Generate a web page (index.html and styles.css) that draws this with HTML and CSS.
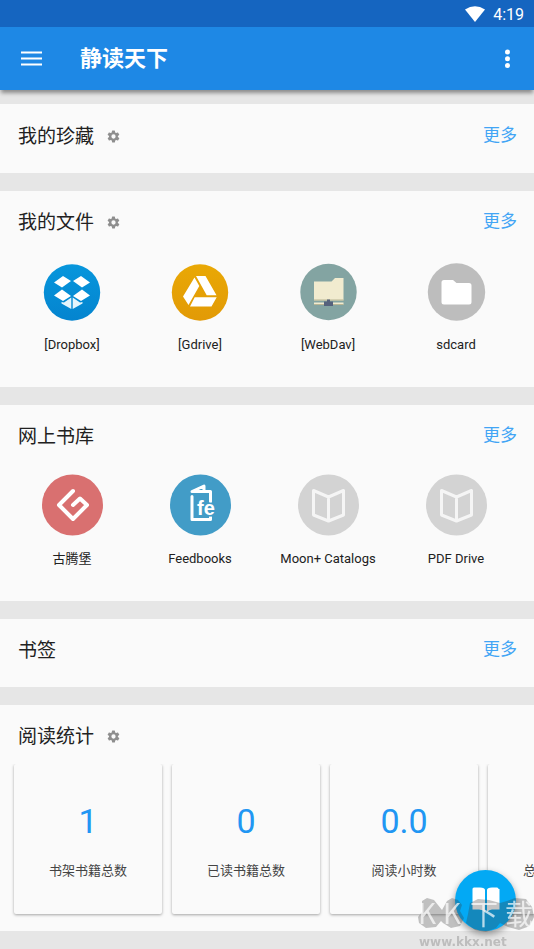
FILE: index.html
```html
<!DOCTYPE html>
<html lang="zh-CN">
<head>
<meta charset="utf-8">
<meta name="viewport" content="width=device-width, initial-scale=1">
<title>静读天下</title>
<link rel="stylesheet" href="styles.css">
</head>
<body>
<svg class="defs" width="0" height="0" aria-hidden="true">
  <defs>
    <symbol id="gear" viewBox="1 1 22 22"><path d="M19.4 13a7.5 7.5 0 0 0 0-2l2.1-1.6a.5.5 0 0 0 .1-.7l-2-3.4a.5.5 0 0 0-.6-.2l-2.5 1a7 7 0 0 0-1.7-1l-.4-2.6a.5.5 0 0 0-.5-.5h-4a.5.5 0 0 0-.5.5L9 5.100a7 7 0 0 0-1.700 1l-2.500-1a.5.5 0 0 0-.6.2l-2 3.400a.5.5 0 0 0 .1.700L4.500 11a7.500 7.500 0 0 0 0 2l-2.100 1.600a.5.5 0 0 0-.1.700l2 3.400c.1.200.4.300.6.200l2.500-1c.5.400 1.100.700 1.700 1l.4 2.600c0 .3.200.5.5.5h4c.3 0 .5-.2.5-.5l.4-2.600a7 7 0 0 0 1.700-1l2.500 1c.2.100.5 0 .6-.2l2-3.400a.5.5 0 0 0-.1-.7zM12 15.600a3.600 3.600 0 1 1 0-7.200 3.600 3.600 0 0 1 0 7.200z"/></symbol>
    <symbol id="catalog" viewBox="0 0 64 64">
      <circle cx="32.500" cy="32" r="30.500" fill="#d3d3d3"/>
      <path d="M17.500 17.500 32.500 24 47.500 17.500V42L32.500 48 17.500 42ZM32.500 24V48" fill="none" stroke="#f5f5f5" stroke-width="3" stroke-linejoin="round"/>
    </symbol>
    <linearGradient id="blue" x2="0" y2="1"><stop stop-color="#0796dc"/><stop offset="1" stop-color="#0484cf"/></linearGradient>
    <linearGradient id="amber" x2="0" y2="1"><stop stop-color="#e9a805"/><stop offset="1" stop-color="#e29a06"/></linearGradient>
  </defs>
</svg>

<div class="status">
  <svg width="20" height="16" viewBox="0 0 20 16" aria-hidden="true"><path d="M0 3.500Q10-3 20 3.500L10 16Z" fill="#fff"/></svg>
  <span>4:19</span>
</div>
<header class="appbar">
  <button class="icon-button" aria-label="菜单"><svg width="22" height="18" viewBox="0 0 22 18"><path d="M1 2.500H22M1 8.500H22M1 14.500H22" stroke="#fff" stroke-width="2"/></svg></button>
  <h1>静读天下</h1>
  <button class="icon-button overflow" aria-label="更多选项"><svg width="6" height="20" viewBox="0 0 6 20" fill="#fff"><circle cx="3.500" cy="3" r="2.500"/><circle cx="3.500" cy="9.700" r="2.500"/><circle cx="3.500" cy="16.400" r="2.500"/></svg></button>
</header>

<main>
  <section>
    <div class="head"><h2>我的珍藏</h2><button class="gear" aria-label="设置"><svg width="13" height="13"><use href="#gear"/></svg></button><a href="#favorites">更多</a></div>
  </section>

  <section>
    <div class="head"><h2>我的文件</h2><button class="gear" aria-label="设置"><svg width="13" height="13"><use href="#gear"/></svg></button><a href="#files">更多</a></div>
    <div class="shortcuts">
      <a href="#dropbox">
        <svg viewBox="0 0 64 64" aria-hidden="true"><circle cx="32" cy="33.500" r="28.200" fill="url(#blue)"/><g fill="#fff"><path d="M23 17 31 22 22 28.500 14 23.500ZM41 17 50 23.500 42 28.500 33 22ZM22 30.500 31 37 23 42 14 36.500ZM42 30.500 50 36.500 41 42 33 37Z"/><path d="M31.300 38.500V50L21.500 44.500V43L24 43.500ZM32.700 38.500V50L42.500 44.500V43L40 43.500Z" fill="#e6f5fc"/></g></svg>
        <span>[Dropbox]</span></a>
      <a href="#gdrive">
        <svg viewBox="0 0 64 64" aria-hidden="true"><circle cx="32" cy="33.500" r="28.200" fill="url(#amber)"/><path d="M28 17H37.500L48.500 36.300H38.700ZM26.500 18.500 31.300 27 20.500 46 15 37.500ZM26.700 38.300H48.700L43.500 47.500H22Z" fill="#fff"/></svg>
        <span>[Gdrive]</span></a>
      <a href="#webdav">
        <svg viewBox="0 0 64 64" aria-hidden="true"><circle cx="32.500" cy="33" r="28.200" fill="#83a4a2"/><path d="M18 22.500H35.500L39 19H47.500V41.500H18ZM18 43.500H47.500V45.500H18Z" fill="#f1ebcf"/><path d="M18 40.500H47.500V41.500H18ZM18 45H47.500V46H18Z" fill="#b9b594"/><path d="M31 40.500H34V42.500H37V47H28V42.500H31Z" fill="#56627c"/></svg>
        <span>[WebDav]</span></a>
      <a href="#sdcard">
        <svg viewBox="0 0 64 64" aria-hidden="true"><circle cx="32.500" cy="33" r="28.700" fill="#bdbdbd"/><path d="M20 21H29L32.500 24H45Q47.500 24 47.500 26.500V43Q47.500 45.500 45 45.500H20Q17.500 45.500 17.500 43V23.500Q17.500 21 20 21Z" fill="#fff"/></svg>
        <span>sdcard</span></a>
    </div>
  </section>

  <section>
    <div class="head"><h2>网上书库</h2><a href="#library">更多</a></div>
    <div class="shortcuts">
      <a href="#gutenberg">
        <svg viewBox="0 0 64 64" aria-hidden="true"><circle cx="32.500" cy="32" r="30.500" fill="#d97070"/><path d="M33 18 19 32 33 46 47 32 40 25.500 33 32" fill="none" stroke="#fff" stroke-width="4" stroke-linecap="round" stroke-linejoin="round"/></svg>
        <span>古腾堡</span></a>
      <a href="#feedbooks">
        <svg viewBox="0 0 64 64" aria-hidden="true"><circle cx="32.500" cy="32" r="30.500" fill="#429cc7"/><path d="M42.500 28.500V18.500H24L36 13V18M24 23.500V46.500H42.500V44" fill="none" stroke="#fff" stroke-width="3" stroke-linejoin="round" stroke-linecap="round"/><text class="fe" x="29" y="41.500">fe</text></svg>
        <span>Feedbooks</span></a>
      <a href="#moon"><svg aria-hidden="true"><use href="#catalog"/></svg><span>Moon+ Catalogs</span></a>
      <a href="#pdfdrive"><svg aria-hidden="true"><use href="#catalog"/></svg><span>PDF Drive</span></a>
    </div>
  </section>

  <section>
    <div class="head"><h2>书签</h2><a href="#bookmarks">更多</a></div>
  </section>

  <section>
    <div class="head"><h2>阅读统计</h2><button class="gear" aria-label="设置"><svg width="13" height="13"><use href="#gear"/></svg></button></div>
    <div class="stats">
      <div class="card"><strong>1</strong><span>书架书籍总数</span></div>
      <div class="card"><strong>0</strong><span>已读书籍总数</span></div>
      <div class="card"><strong>0.0</strong><span>阅读小时数</span></div>
      <div class="card"><strong></strong><span class="start">总</span></div>
    </div>
  </section>
</main>

<button class="fab" aria-label="继续阅读"><svg width="28" height="27" viewBox="0 0 28 27"><path d="M.5 2Q.5.500 2 .5H8Q13 .5 13 3V25Q11 22.500 7 22.500H.5ZM26.500 2Q26.500.5 25 .5H20Q15 .5 15 3V25Q17 22.500 20 22.500H27.500V2Z" fill="#fff"/></svg></button>

<div class="watermark">
  <svg width="120" height="46" viewBox="0 0 120 46" aria-hidden="true">
    <path class="blob" d="M8 11 13 8 20 10 24 15 28 20 33 11 38 8 44 10 48 15 46 21 50 28 46 36 37 38 29 33 27 31 22 37 12 38 5 33 4 27 8 22ZM56 13 64 9 75 10 86 13 93 11 101 8 112 9 118 17 120 27 116 36 105 40 94 37 86 33 82 38 72 42 61 40 52 33 54 24Z"/>
    <g class="mark"><text x="4" y="34">K</text><text x="29" y="34">K</text><text x="56" y="35">下</text><text x="91" y="35">载</text></g>
  </svg>
  <span>www.kkx.net</span>
</div>
</body>
</html>
```
FILE: styles.css
```css
* { box-sizing: border-box; }
body {
  margin: 0;
  background: #e6e6e6;
  color: #212121;
  font-family: Roboto, "Noto Sans CJK SC", sans-serif;
  font-size: 13px;
}
h1, h2 { margin: 0; }
a { text-decoration: none; color: inherit; }
button { border: 0; padding: 0; background: none; display: flex; align-items: center; justify-content: center; }
.defs { position: absolute; }

.status {
  height: 27px;
  padding: 1px 10px 0;
  display: flex;
  align-items: center;
  justify-content: flex-end;
  gap: 8px;
  background: #1565c0;
  color: #fff;
  font-size: 16px;
}
.appbar {
  height: 63px;
  padding: 0 20px;
  display: flex;
  align-items: center;
  background: #1e88e5;
  color: #fff;
  box-shadow: 0 4px 4px -1px rgba(0, 0, 0, .4);
}
.appbar h1 { margin-left: 38px; font-size: 22px; line-height: 32px; font-weight: 700; }
.overflow { margin-left: auto; margin-right: 4px; }

main { padding: 14px 0 18px; display: flex; flex-direction: column; gap: 18px; }
section { background: #fafafa; padding-bottom: 5px; }
section:first-child { padding-top: 1px; }
.head { height: 63px; padding: 1px 17px 0 18px; display: flex; align-items: center; }
.head h2 { font-size: 19px; line-height: 28px; font-weight: 400; }
.head a { margin-left: auto; margin-bottom: 4px; font-size: 17px; line-height: 24px; color: #42a5f5; }
.gear { margin: 0 0 2px 13px; fill: #8e8e8e; }

.shortcuts { display: grid; grid-template-columns: repeat(4, 1fr); padding: 5px 14px 22px 8px; }
.shortcuts a { display: flex; flex-direction: column; align-items: center; gap: 12px; white-space: nowrap; }
.shortcuts svg { width: 64px; height: 64px; }
.shortcuts span { line-height: 20px; height: 25px; }
.fe { font: bold 20px "Liberation Sans", sans-serif; fill: #fff; stroke: #429cc7; stroke-width: 3px; paint-order: stroke; }

.stats { display: flex; gap: 10px; padding: 0 14px 12px; margin-top: -4px; overflow: hidden; }
.card {
  flex: 0 0 148px;
  height: 150px;
  padding-top: 37px;
  display: flex;
  flex-direction: column;
  align-items: center;
  gap: 20px;
  border-radius: 2px;
  box-shadow: 0 1px 3px rgba(0, 0, 0, .35);
}
.card strong { height: 40px; font-size: 34px; line-height: 40px; font-weight: 400; color: #2196f3; }
.card span { line-height: 20px; color: #444; }
.card .start { width: 78px; }

.fab {
  position: fixed;
  right: 18px;
  bottom: 18px;
  width: 61px;
  height: 61px;
  border-radius: 50%;
  background: #03a9f4;
  box-shadow: 0 3px 7px rgba(0, 0, 0, .4);
}
.watermark { position: fixed; right: 0; bottom: 0; width: 120px; pointer-events: none; }
.watermark svg { display: block; }
.watermark span {
  display: block;
  padding-left: 5px;
  font: bold 12px/13px "DejaVu Sans", sans-serif;
  color: #bdbdbd;
}
.blob { fill: rgba(60, 60, 60, .3); }
.mark { font: 28px "Noto Sans CJK SC", sans-serif; fill: rgba(255, 255, 255, .7); }
```
